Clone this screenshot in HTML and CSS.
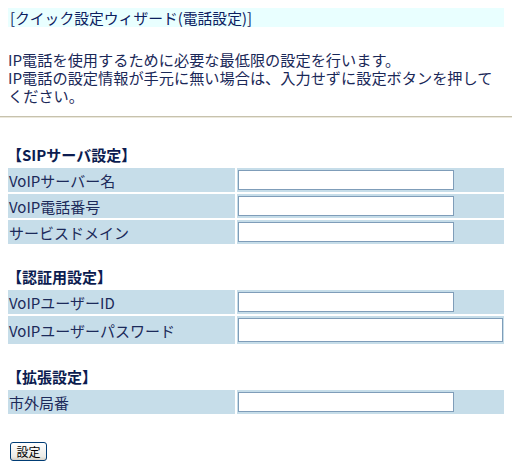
FILE: index.html
```html
<!DOCTYPE html>
<html lang="ja">
<head>
<meta charset="utf-8">
<link rel="stylesheet" href="styles.css">
</head>
<body>
<div class="wrap">
  <div class="title">[クイック設定ウィザード(電話設定)]</div>
  <p class="intro">IP電話を使用するために必要な最低限の設定を行います。<br>IP電話の設定情報が手元に無い場合は、入力せずに設定ボタンを押して<br>ください。</p>
</div>
<hr class="rule">
<form class="wrap form">
  <div class="section">
    <div class="sec-head">【SIPサーバ設定】</div>
    <div class="grid">
      <div class="label">VoIPサーバー名</div>
      <div class="field"><input class="inp" type="text"></div>
      <div class="label">VoIP電話番号</div>
      <div class="field"><input class="inp" type="text"></div>
      <div class="label">サービスドメイン</div>
      <div class="field"><input class="inp" type="text"></div>
    </div>
  </div>
  <div class="section">
    <div class="sec-head">【認証用設定】</div>
    <div class="grid">
      <div class="label">VoIPユーザーID</div>
      <div class="field"><input class="inp" type="text"></div>
      <div class="label">VoIPユーザーパスワード</div>
      <div class="field"><input class="inp wide" type="password"></div>
    </div>
  </div>
  <div class="section">
    <div class="sec-head">【拡張設定】</div>
    <div class="grid">
      <div class="label">市外局番</div>
      <div class="field"><input class="inp" type="text"></div>
    </div>
  </div>
  <div class="actions"><button class="btn" type="button">設定</button></div>
</form>
</body>
</html>
```

FILE: styles.css
```css
html, body {
  margin: 0;
  padding: 0;
  background: #ffffff;
}
body {
  font-family: "Noto Sans CJK JP", "Noto Sans", sans-serif;
  font-size: 15px;
  color: #1a2858;
}
.wrap {
  padding: 0 8px;
}
.title {
  margin-top: 8px;
  height: 19px;
  line-height: 19px;
  background: #e9ffff;
  padding-left: 2px;
  color: #0c2060;
  font-size: 14.8px;
}
.intro {
  margin: 23px 0 0;
  line-height: 18px;
  font-size: 15.2px;
}
.rule {
  margin: 12px 0 0;
  height: 0;
  border: 0;
  border-top: 1px solid #c7c2ad;
  border-bottom: 1px solid #ebe8dc;
}
.form {
  padding-top: 26px;
}
.section {
  margin-bottom: 22px;
}
.sec-head {
  line-height: 22px;
  height: 22px;
  font-weight: bold;
  color: #0c1c50;
  margin-bottom: 2px;
  margin-left: -1px;
}
.grid {
  display: grid;
  grid-template-columns: 227px 1fr;
  gap: 2px;
}
.label {
  background: #c6dde9;
  display: flex;
  align-items: center;
  padding-left: 1px;
  color: #1c2a5a;
}
.field {
  background: #c6dde9;
  padding: 2px 1px;
  display: flex;
  align-items: center;
}
.inp {
  box-sizing: border-box;
  width: 216px;
  height: 20px;
  margin: 0;
  border: 1px solid #7f9db9;
  background: #ffffff;
  padding: 0 2px;
  outline: none;
}
.inp.wide {
  width: 265px;
  height: 24px;
}
.actions {
  margin-top: 26px;
  padding-left: 2px;
}
.section:last-of-type {
  margin-bottom: 0;
}
.btn {
  box-sizing: border-box;
  width: 37px;
  height: 19px;
  padding: 0;
  border: 1px solid #003c74;
  border-radius: 3px;
  background: linear-gradient(#ffffff, #ecebe6 80%, #d6d0c5);
  font-family: "Noto Sans CJK JP", sans-serif;
  font-size: 12px;
  line-height: 17px;
  color: #000000;
}
```
